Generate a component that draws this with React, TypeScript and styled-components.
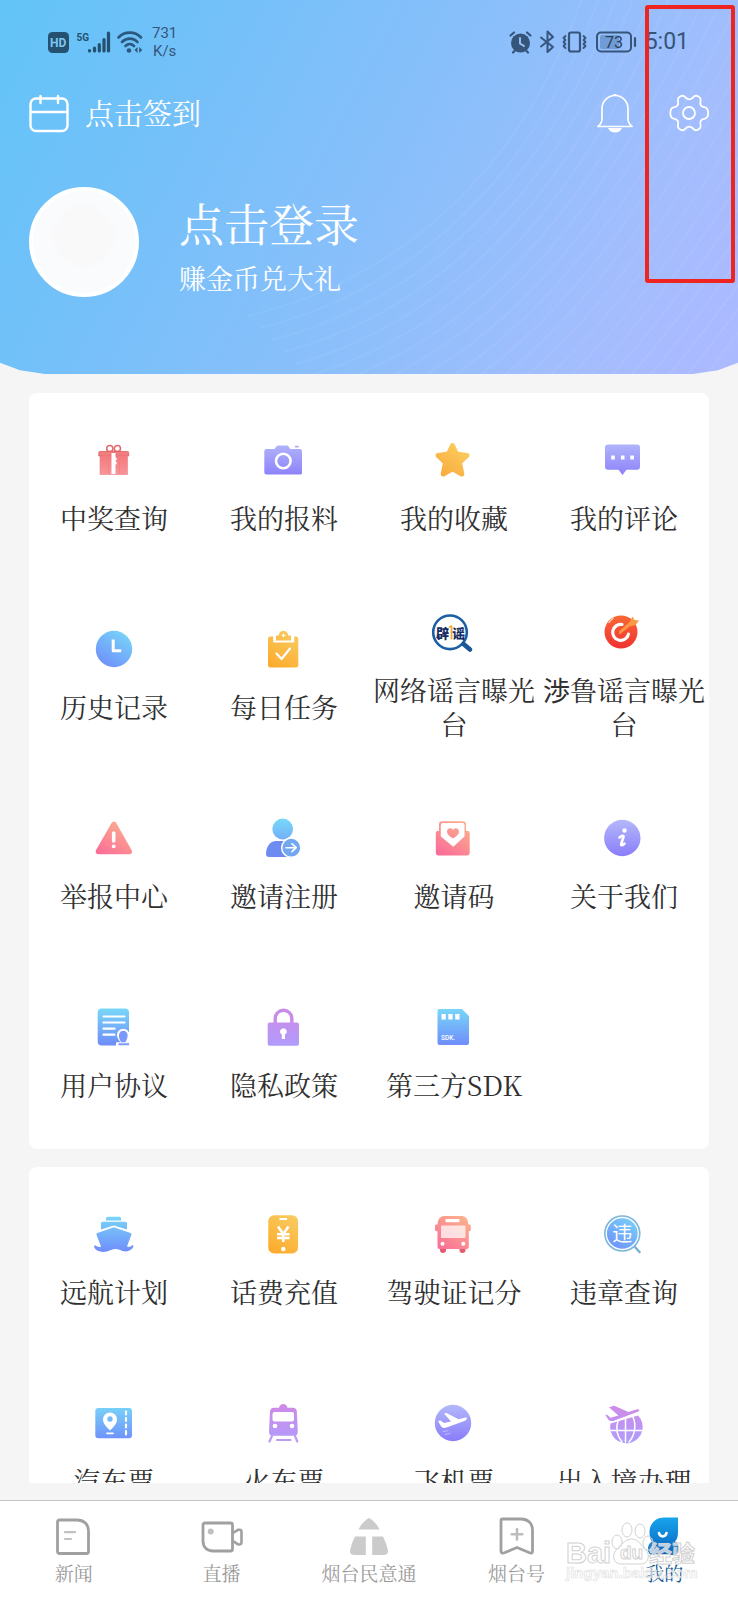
import React from "react";
import styled, { createGlobalStyle } from "styled-components";

const serif = `"Noto Serif CJK SC", "Liberation Serif", "Noto Sans CJK SC", serif`;

const GlobalStyle = createGlobalStyle`
  * { box-sizing: border-box; }
  body { margin: 0; background: #f5f5f5; font-family: ${serif}; font-weight: 400; }
  button { border: 0; padding: 0; background: none; font: inherit; color: inherit; cursor: pointer; }
  a { color: inherit; text-decoration: none; }
  svg { display: block; overflow: visible; flex: none; }
`;

const Screen = styled.div`
  position: relative;
  display: flex;
  flex-direction: column;
  height: 100vh;
  background: #f5f5f5;
`;

const Scroller = styled.div`
  flex: 1;
  min-height: 0;
  margin-bottom: 17px;
  overflow-y: auto;
  scrollbar-width: none;
`;

const Header = styled.header`
  position: relative;
  padding-bottom: 77px;
  color: #fff;
  background: linear-gradient(118deg, #62c4f8 0%, #76c0f9 28%, #8dbffb 58%, #a3bdfd 82%, #adb9ff 100%);
  clip-path: polygon(0 0, 100% 0, 100% 97%, calc(100% - 20px) 99%, calc(100% - 45px) 100%, 45px 100%, 20px 99%, 0 97%);
`;

const Waves = styled.svg`
  position: absolute;
  right: 0;
  bottom: 0;
  width: 500px;
  height: 374px;
`;

const StatusBar = styled.div`
  position: relative;
  display: flex;
  align-items: center;
  justify-content: space-between;
  height: 84px;
  padding: 0 49px 0 48px;
  color: #35557a;
  font-family: Roboto, sans-serif;
  font-weight: 400;
`;

const StatusGroup = styled.div<{ $gap: number }>`
  display: flex;
  align-items: center;
  gap: ${(p) => p.$gap}px;
`;

const Speed = styled.div`
  font-size: 15px;
  line-height: 18px;
  text-align: center;
`;

const Clock = styled.time`
  font-size: 23px;
  line-height: 26px;
`;

const ActionRow = styled.div`
  position: relative;
  display: flex;
  align-items: center;
  justify-content: space-between;
  height: 58px;
  padding: 0 29px;
`;

const SignIn = styled.button`
  display: flex;
  align-items: center;
  gap: 16px;
  font-size: 29px;
  line-height: 40px;
`;

const Tools = styled.div`
  display: flex;
  gap: 34px;
`;

const Profile = styled.button`
  position: relative;
  display: flex;
  align-items: flex-end;
  gap: 40px;
  margin: 45px 29px 0;
  text-align: left;
`;

const Avatar = styled.span`
  width: 110px;
  height: 110px;
  border: 4px solid #fff;
  border-radius: 50%;
  background: radial-gradient(circle at 50% 44%, #f9f9fa 0 28px, #fafbfd 34px);
`;

const ProfileText = styled.span`
  display: flex;
  flex-direction: column;
  gap: 10px;
`;

const Name = styled.span`
  font-size: 45px;
  line-height: 52px;
`;

const Hint = styled.span`
  font-size: 27px;
  line-height: 38px;
`;

const Cards = styled.main`
  display: flex;
  flex-direction: column;
  gap: 18px;
  padding: 19px 29px 0;
`;

const Card = styled.section`
  display: grid;
  grid-template-columns: repeat(4, 1fr);
  grid-auto-rows: 189px;
  border-radius: 8px;
  background: #fff;
`;

const Entry = styled.a`
  display: flex;
  flex-direction: column;
  align-items: center;
  justify-content: center;
  gap: 21px;
  color: #303030;
  font-size: 27px;
  line-height: 34px;
  text-align: center;
`;

const SansGlyph = styled.span`
  font-family: "Noto Sans CJK SC", sans-serif;
  line-height: 1;
`;

const TabBar = styled.nav`
  position: relative;
  display: grid;
  grid-template-columns: repeat(5, 1fr);
  height: 100px;
  border-top: 1px solid #c4c4c4;
  background: #fff;
`;

const Tab = styled.a<{ $active?: boolean }>`
  display: flex;
  flex-direction: column;
  align-items: center;
  gap: 2px;
  padding-top: 16px;
  color: ${(p) => (p.$active ? "#0f5590" : "#999")};
  font-size: 19px;
  line-height: 28px;
`;

const Highlight = styled.div`
  position: absolute;
  top: 5px;
  right: 3px;
  width: 90px;
  height: 278px;
  border: 4px solid #ee2420;
  border-radius: 3px;
  pointer-events: none;
`;

const Watermark = styled.svg`
  position: absolute;
  right: 36px;
  bottom: 12px;
  pointer-events: none;
`;

/* ---------- entry icons, all on a 40 x 40 grid ---------- */

type Stops = [string, string];
const blue: Stops = ["#78d6f8", "#6f8dfb"];
const violet: Stops = ["#b3b8fb", "#8a7dfa"];
const gold: Stops = ["#f8cc62", "#fcab2c"];
const coral: Stops = ["#fbb48c", "#fb6c98"];
const orchid: Stops = ["#d08ae6", "#b09cfc"];

function Icon({ id, stops, diagonal, children }: { id: string; stops: Stops; diagonal?: boolean; children: React.ReactNode }) {
  return (
    <svg width="40" height="40" viewBox="0 0 40 40" fill={`url(#${id})`} aria-hidden="true">
      <defs>
        <linearGradient id={id} gradientUnits="userSpaceOnUse" x1={diagonal ? 32 : 20} y1="2" x2={diagonal ? 8 : 20} y2="38">
          <stop offset="0" stopColor={stops[0]} />
          <stop offset="1" stopColor={stops[1]} />
        </linearGradient>
      </defs>
      {children}
    </svg>
  );
}

const line = (w: number, stroke = "#fff") =>
  ({ fill: "none", stroke, strokeWidth: w, strokeLinecap: "round", strokeLinejoin: "round" }) as const;

const Gift = () => (
  <Icon id="gift" stops={["#ee6668", "#f99a9f"]}>
    <circle cx="15.800" cy="8.500" r="3.100" {...line(1.500, "#e4686b")} />
    <circle cx="23.400" cy="8.500" r="3.100" {...line(1.500, "#e4686b")} />
    <path d="M6 11.500h27.500a1.200 1.200 0 0 1 1.200 1.200v3.300H4.800v-3.300A1.200 1.200 0 0 1 6 11.500z" fill="#f07e7e" stroke="#dd6064" strokeWidth=".8" />
    <path d="M6 16h27.500v18.500H6z" stroke="#ee7f86" strokeWidth=".6" />
    <path d="M17.500 13h4v4l1.500 2-1.500 2 1.500 2-1.500 2v9h-4z" fill="#fff" />
    <path d="M14.500 17v17M25.500 18v16" stroke="#f07d80" strokeWidth=".7" />
  </Icon>
);
const Camera = () => (
  <Icon id="camera" stops={violet}>
    <path d="M2.500 9H10c1.500 0 2-3.600 4-3.600h9c2 0 2.500 3.600 4 3.600h8.800A2.200 2.200 0 0 1 38 11.200v21A2.200 2.200 0 0 1 35.800 34.600H2.500A2.200 2.200 0 0 1 .3 32.300V11.200A2.200 2.200 0 0 1 2.500 9z" />
    <circle cx="19.300" cy="21" r="7.300" {...line(2.6)} />
    <path d="M31.500 6.600h2.500" {...line(1.600, "#aaa9f0")} />
  </Icon>
);
const Star = () => (
  <Icon id="star" stops={["#fbd262", "#f9a93c"]} diagonal>
    <path d="M18.500 5.500l4 8.500 10.500 1.500-7.500 7 2.300 11.500-9.300-5.200-9.300 5.200 2.300-11.500-7.500-7 10.500-1.500z" stroke="url(#star)" strokeWidth="5" strokeLinejoin="round" />
  </Icon>
);
const Comment = () => (
  <Icon id="comment" stops={violet}>
    <path d="M4 4.400h29a3 3 0 0 1 3 3v19.300a3 3 0 0 1-3 3H22.500L18.500 35l-4-5.300H4a3 3 0 0 1-3-3V7.400a3 3 0 0 1 3-3z" />
    <path d="M7.200 15.500h3.600v4H7.200zM16.900 15.500h3.600v4h-3.600zM26.300 15.500h3.600v4h-3.600z" fill="#fff" />
  </Icon>
);
const History = () => (
  <Icon id="history" stops={blue} diagonal>
    <circle cx="20" cy="20" r="18.200" />
    <path d="M19.200 12v9.700h6.500" {...line(3)} strokeLinecap="square" />
  </Icon>
);
const Task = () => (
  <Icon id="task" stops={gold} diagonal>
    <rect x="4" y="7.500" width="30.300" height="31" rx="2.500" />
    <path d="M9.200 4h21v9.500h-21z" fill="#fff" />
    <path d="M12 11.500V6.600h2.600a4.800 4.800 0 0 1 9.600 0H27v4.900z" />
    <path d="M19.500 5.200v2.400M18.300 6.400h2.400" {...line(1.300)} />
    <path d="M12.500 24.500l5 5.500 8.500-10.500" {...line(2.200)} />
  </Icon>
);
const Rumor = () => (
  <Icon id="rumor" stops={blue}>
    <circle cx="16" cy="20.300" r="16.800" {...line(2.600, "#1c5fa5")} />
    <path d="M29.500 32l6.500 5.600" {...line(4.600, "#1a5799")} />
    <text x="2" y="25.500" fontSize="13" fontWeight="900" fill="#162c62" fontFamily="Noto Sans CJK SC, sans-serif">辟</text>
    <text x="18" y="25.500" fontSize="13" fontWeight="900" fill="#162c62" fontFamily="Noto Sans CJK SC, sans-serif">谣</text>
    <path d="M15.500 15l2-.800V26.500" {...line(1.800, "#f0ab3a")} />
  </Icon>
);
const Target = () => (
  <Icon id="target" stops={["#fa6a35", "#f02f31"]}>
    <circle cx="17" cy="20" r="16.500" />
    <path d="M5 10.500a16 16 0 0 1 4-4" {...line(1.400, "#ffc9b0")} />
    <path d="M18 12.500a8 8 0 1 0 6.500 9.500" {...line(3.200)} />
    <path d="M15 19.500l11-10 2.500-5 2 3.500 4.500.500-3.500 4.500-6 1.500-10 8z" fill="#fb9a44" />
  </Icon>
);
const Warning = () => (
  <Icon id="warning" stops={coral} diagonal>
    <path d="M20 6.500L35.200 33.500H4.500z" stroke="url(#warning)" strokeWidth="5.600" strokeLinejoin="round" />
    <path d="M19.700 15v8" {...line(3.600)} />
    <circle cx="19.700" cy="28.300" r="1.900" fill="#fff" />
  </Icon>
);
const Invite = () => (
  <Icon id="invite" stops={blue}>
    <circle cx="18.700" cy="11" r="10.400" />
    <path d="M12 23h16v16H5c-2 0-3-1-3-3 0-7 4-13 10-13z" fill="#6d8cf2" />
    <circle cx="27.300" cy="29.700" r="9.600" fill="#72a8f2" stroke="#fff" strokeWidth="1.500" />
    <path d="M22 29.700h10M28 25.800l4.200 3.900-4.200 3.900" {...line(1.600)} />
  </Icon>
);
const Envelope = () => (
  <Icon id="envelope" stops={coral} diagonal>
    <path d="M8 3.200h21a3 3 0 0 1 3 3V13h1.700a2 2 0 0 1 2 2v20a2.400 2.400 0 0 1-2.400 2.400H4.200A2.400 2.400 0 0 1 1.800 35V15a2 2 0 0 1 2-2H5V6.200a3 3 0 0 1 3-3z" />
    <path d="M8.500 5h20a2 2 0 0 1 2 2v11.500L19.300 28.800 6.800 18.500V7a2 2 0 0 1 1.700-2z" fill="#fff" />
    <path d="M19 20.500c-4-2.500-6-4.200-6-7 0-3.600 4.500-4.500 6-1.500 1.500-3 6-2.100 6 1.500 0 2.800-2 4.500-6 7z" />
  </Icon>
);
const Info = () => (
  <Icon id="info" stops={violet}>
    <circle cx="18.300" cy="20" r="18.200" />
    <circle cx="20.500" cy="12.500" r="2.200" fill="#fff" />
    <path d="M15.500 19.500c2-2 4.500-2.500 4-.500l-2.200 6.500c-.800 2.500 1.500 2 3.200.200" {...line(2.600)} />
  </Icon>
);
const Agreement = () => (
  <Icon id="agreement" stops={blue}>
    <rect x="3.700" y="1.500" width="31.300" height="37" rx="4" />
    <path d="M9.500 9.500h21M9.500 15.500h21M9.500 21.700h11M9.500 27.700h11" {...line(2.200)} />
    <path d="M22 39v-3.500h5c-3-3-4-5-4-7.500a6 6 0 0 1 12.500 0V39z" fill="#fff" />
    <path d="M24.500 35.500h3c-2-3-2.800-5-2.500-7.500a4.300 4.300 0 0 1 8.600 0c0 2.500-.500 4.500-2.500 7.500h4v2.800H24.500z" fill="#7b99f8" />
    <path d="M23.500 35.800h12" {...line(1)} />
  </Icon>
);
const Lock = () => (
  <Icon id="lock" stops={orchid}>
    <path d="M11.200 18V11.500a8.300 8.300 0 0 1 16.600 0V18" {...line(3.400, "#c78de8")} />
    <rect x="3.700" y="15.500" width="31.300" height="23.200" rx="2" />
    <path d="M19.400 21.200a3.400 3.400 0 0 1 1.600 6.400V32h-3.200v-4.400a3.400 3.400 0 0 1 1.600-6.400z" fill="#fff" />
  </Icon>
);
const Sdk = () => (
  <Icon id="sdk" stops={blue}>
    <path d="M5.500 2H28l7 7v27a2 2 0 0 1-2 2H5.500a2 2 0 0 1-2-2V4a2 2 0 0 1 2-2z" />
    <path d="M7.500 7h4.300v5.500H7.500zM14.300 7h4.300v5.500h-4.300zM21.200 7h4.300v5.500h-4.300z" fill="#fff" />
    <text x="7" y="33" fontSize="6.500" fontWeight="500" fill="#fff" fontFamily="Roboto, sans-serif">SDK.</text>
  </Icon>
);
const Ship = () => (
  <Icon id="ship" stops={blue}>
    <path d="M13.500 2.800h12a1.500 1.500 0 0 1 1.500 1.500V6.500H12V4.300a1.500 1.500 0 0 1 1.500-1.500z" />
    <path d="M8.500 7.800H31.500a1.500 1.500 0 0 1 1.500 1.500V15.500L19.800 11.500 7 15.500V9.300a1.500 1.500 0 0 1 1.500-1.500z" />
    <path d="M19.800 13.200L36.500 19c1 .400 1.200 1 .800 2L33 32.500c1.500.800 3.500.500 5.500-1.500 1.200.300 1.200 1.500.300 2.800-3.500 4.600-9 4.300-12.800 2.200-3-1.300-6-1.300-9 0C10 39.500 2.500 38 .400 33.800c-.700-1.300 0-2.500 1-2.500C3.500 33 5.500 33.500 7 32.500L2.600 21c-.400-1-.200-1.600.800-2z" />
  </Icon>
);
const Recharge = () => (
  <Icon id="recharge" stops={gold} diagonal>
    <rect x="4.300" y="1.200" width="29.800" height="38.400" rx="6" />
    <path d="M16.500 5h5.500" {...line(2)} strokeLinecap="square" />
    <path d="M14 12.500l5.300 7.500 5.300-7.500M13 20.200h12.600M13 24h12.600M19.300 20v8" {...line(2.600)} strokeLinecap="butt" />
    <circle cx="19.300" cy="35" r="2.200" fill="#fff" />
  </Icon>
);
const Bus = () => (
  <Icon id="bus" stops={coral} diagonal>
    <path d="M6 33h6v3a3 3 0 0 1-6 0zM25.500 33h6v3a3 3 0 0 1-6 0z" fill="#e45a70" />
    <path d="M10 2h18c4 .400 6 3 6.300 8.500h1.200q1.300 0 1.300 1.300v4q0 1.500-2 1.500V33q0 2-2 2H5.500q-2 0-2-2V17.300Q1 17.300 1 15.800v-4q0-1.300 1.300-1.300h1.200C4 5 6 2.400 10 2z" />
    <rect x="11.500" y="5" width="14" height="3.200" rx="1" fill="#fff" />
    <rect x="7" y="11.500" width="24.500" height="12.500" rx="1" fill="#fff" opacity=".72" />
    <circle cx="8.500" cy="29.700" r="2" fill="#fff" />
    <circle cx="29.300" cy="29.700" r="2" fill="#fff" />
  </Icon>
);
const Violation = () => (
  <Icon id="violation" stops={blue} diagonal>
    <path d="M30.500 32.500l5 5.500" {...line(2.600, "#7fb3d2")} />
    <circle cx="18.300" cy="19.500" r="18.300" fill="#7cb6dc" />
    <circle cx="18.300" cy="19.500" r="16" stroke="#fff" strokeWidth="1.300" />
    <text x="8.300" y="27" fontSize="20" fontWeight="400" fill="#fff" fontFamily="Noto Sans CJK SC, sans-serif">违</text>
  </Icon>
);
const Ticket = () => (
  <Icon id="ticket" stops={blue}>
    <rect x="1.300" y="5" width="36.700" height="30.200" rx="3" />
    <path d="M16 27.500c-4-4-7-7-7-11a7 7 0 0 1 14 0c0 4-3 7-7 11z" fill="#fff" />
    <circle cx="16" cy="16" r="2.700" />
    <path d="M13 30.300h6" {...line(1.800)} />
    <path d="M32 8.500v3M32 15v3M32 21.500v3M32 28v3.500" {...line(2.200)} />
  </Icon>
);
const Train = () => (
  <Icon id="train" stops={orchid}>
    <path d="M15 5.500c0-6 8.500-6 8.500 0z" />
    <path d="M10 4.800h19q3.500 0 3.800 3.500l1 20.200q.200 4.200-4 4.200H9q-4.200 0-4-4.200l1-20.200q.300-3.500 4-3.500z" />
    <rect x="8.500" y="9" width="21.500" height="9.500" rx="2" fill="#fff" />
    <circle cx="11" cy="23" r="2.300" fill="#fff" />
    <circle cx="28" cy="23" r="2.300" fill="#fff" />
    <path d="M8 33l-2.500 5.500M31 33l2.300 5.500M13 37h13.500" {...line(2.200, "#bd9bf5")} />
  </Icon>
);
const Flight = () => (
  <Icon id="flight" stops={violet}>
    <circle cx="19" cy="20" r="18.200" />
    <path d="M4 18l2.500-.500 3.500 2.500 7-1.500-7-8 2.500-.600 12 6.300 6-1.500c3-.600 3 2 .500 3L12.500 24.500c-2.500.800-4.500.300-5.500-1.200z" fill="#fff" />
    <path d="M9 28.500l5-.800M11 31.500l5-1" {...line(.8, "#c8c6fd")} />
  </Icon>
);
const Border = () => (
  <Icon id="border" stops={orchid}>
    <path d="M6.500 20.500L34 12.500a16.300 16.300 0 1 1-27.500 8z" />
    <path d="M5 27.500h33M21.500 15v24M14 18c-2.500 7-1.500 14 4 21M29 14c3.500 8 2 18-4 25" {...line(1.500)} />
    <path d="M.500 11.500l2.700-.500 3.500 3 6.500-1.800L4 4.200 10 2l14.500 6.300L32 6c4.500-1 5.500 2 1.500 3.500L10 18.200c-3 1-5 .300-6.500-1.700z" stroke="#fff" strokeWidth="1.200" />
  </Icon>
);

const services = [
  ["中奖查询", Gift], ["我的报料", Camera], ["我的收藏", Star], ["我的评论", Comment],
  ["历史记录", History], ["每日任务", Task], ["网络谣言曝光台", Rumor], ["渉鲁谣言曝光台", Target],
  ["举报中心", Warning], ["邀请注册", Invite], ["邀请码", Envelope], ["关于我们", Info],
  ["用户协议", Agreement], ["隐私政策", Lock], ["第三方SDK", Sdk],
] as const;

const life = [
  ["远航计划", Ship], ["话费充值", Recharge], ["驾驶证记分", Bus], ["违章查询", Violation],
  ["汽车票", Ticket], ["火车票", Train], ["飞机票", Flight], ["出入境办理", Border],
] as const;

/* ---------- tab icons ---------- */

const NewsIcon = () => (
  <svg width="40" height="40" viewBox="0 0 40 40" aria-hidden="true">
    <path d="M5.500 3H23c7 0 11.500 4.500 11.500 11v20.500a2 2 0 0 1-2 2h-27a2 2 0 0 1-2-2V5a2 2 0 0 1 2-2z" {...line(2.800, "#a0a0a0")} />
    <path d="M11 15.200h10M11 22h6" {...line(2.200, "#c2c2c2")} />
  </svg>
);
const LiveIcon = () => (
  <svg width="40" height="40" viewBox="0 0 40 40" aria-hidden="true">
    <path d="M4 6h25.500a2 2 0 0 1 2 2v24a2 2 0 0 1-2 2H12C6 34 2 30 2 24V8a2 2 0 0 1 2-2z" {...line(2.800, "#a0a0a0")} />
    <path d="M32 16l5-3.200q3.500-.600 3.500 2V25.500q0 2.500-3.500 1.800L32 24" {...line(2.600, "#a0a0a0")} />
    <circle cx="9.700" cy="14.500" r="3" fill="#c0c0c0" />
  </svg>
);
const PublicIcon = () => (
  <svg width="40" height="40" viewBox="0 0 40 40" fill="#cbcbcb" aria-hidden="true">
    <path d="M20 1c4.500 2.500 8 6.500 10.500 11.500h-21C12 7.500 15.500 3.500 20 1z" />
    <path d="M6 19.500h10.800V38H5q-4.500-.500-4-4.500Q2.500 26 6 19.500zM23.200 19.500H34q3.500 6.500 5 14 .500 4-4 4.500H23.200z" />
  </svg>
);
const ChannelIcon = () => (
  <svg width="40" height="40" viewBox="0 0 40 40" aria-hidden="true">
    <path d="M5.500 2H24c7 0 11.500 4.500 11.500 11v21q0 3-3 1.800L20 30.500 7.500 35.800Q4 37 4 34V3.500Q4 2 5.500 2z" {...line(2.800, "#a0a0a0")} />
    <path d="M20 12v10.500M14.700 17.200h10.600" {...line(2.600, "#bdbdbd")} />
  </svg>
);
const MineIcon = () => (
  <svg width="40" height="40" viewBox="0 0 40 40" aria-hidden="true">
    <defs>
      <linearGradient id="mine" x1="0" y1="0" x2="0" y2="1">
        <stop offset="0" stopColor="#18a4ec" />
        <stop offset="1" stopColor="#0a63bd" />
      </linearGradient>
    </defs>
    <path d="M20 .500h14v14c0 5-1 8-3 10 3 1.500 4.500 4 4 8.500q-.500 5-5 5H9q-4.500 0-5-5c-.500-4 1.500-7 4-8.500-2-2.500-2.500-5-2.500-9.500C5.500 6.500 12 .500 20 .500z" fill="url(#mine)" />
    <path d="M15 16c1 4.500 6.500 4.500 7.500 0" {...line(2.600)} />
  </svg>
);

const tabs = [
  ["新闻", NewsIcon], ["直播", LiveIcon], ["烟台民意通", PublicIcon], ["烟台号", ChannelIcon], ["我的", MineIcon],
] as const;

const labelText = (label: string) =>
  label.startsWith("渉") ? (
    <>
      <SansGlyph>渉</SansGlyph>
      {label.slice(1)}
    </>
  ) : (
    label
  );

function EntryGrid({ items }: { items: readonly (readonly [string, React.ComponentType])[] }) {
  return (
    <Card>
      {items.map(([label, Glyph]) => (
        <Entry href="#" key={label}>
          <Glyph />
          <span>{labelText(label)}</span>
        </Entry>
      ))}
    </Card>
  );
}

const ink = "#35557a";

export default function App() {
  return (
    <Screen>
      <GlobalStyle />
      <Scroller>
        <Header>
          <Waves viewBox="0 0 500 374" aria-hidden="true">
            {Array.from({ length: 22 }, (_, i) => (
              <path
                key={i}
                d={`M${10 + i * 12} ${316 + i * 12} C ${160 + i * 10} ${280 + i * 11}, ${290 + i * 9} ${170 + i * 10}, ${350 + i * 16} ${-20 + i * 4}`}
                fill="none"
                stroke="#fff"
                strokeOpacity=".06"
                strokeWidth="2"
              />
            ))}
          </Waves>
          <StatusBar>
            <StatusGroup $gap={10}>
              <svg width="94" height="24" viewBox="0 0 94 24" aria-hidden="true">
                <rect x="0" y="2" width="21" height="21" rx="4.500" fill="#23516f" />
                <text x="2" y="17" fontSize="12" fontWeight="700" fill="#7fc6f0">HD</text>
                <text x="28.500" y="10.500" fontSize="10" fontWeight="700" fill="#23516f">5G</text>
                <path d="M41.500 20.500v.500M46.500 18v3M51.300 14.500v6.500M56 9.500v11.500M60.500 3v18" {...line(3.200, "#23516f")} />
                <path d="M70.500 7.500c6-6.500 16.500-6.500 22.500 0M74 12c4.500-4.500 11.500-4.500 15.500 0M77.500 16c2.500-2.500 6-2.500 8.500 0" {...line(2.600, "#2c587e")} />
                <circle cx="81" cy="20.500" r="2.300" fill="#2c587e" />
                <path d="M89.500 17v6l-3-3zM91.200 17v6l3-3z" fill="#2c587e" />
              </svg>
              <Speed>731<br />K/s</Speed>
            </StatusGroup>
            <StatusGroup $gap={9}>
              <svg width="128" height="24" viewBox="0 0 128 24" aria-hidden="true">
                <circle cx="12.500" cy="13" r="9.500" fill={ink} />
                <path d="M2.500 5.500l3.500-3M22.500 5.500l-3.500-3M5 22.500l3-3M20 22.500l-3-3" {...line(2.200, ink)} />
                <path d="M12 8v5.500l4 2.500" {...line(1.900, "#9cc4f5")} />
                <path d="M33 7.500l12 9.500-5.500 5V1.500L45 7 33 16.500" {...line(2, ink)} />
                <rect x="61" y="2.500" width="11" height="19" rx="2" {...line(2.200, ink)} />
                <path d="M57.500 6l-2 2 2 2-2 2 2 2-2 2 2 2M75.500 6l2 2-2 2 2 2-2 2 2 2-2 2" {...line(1.800, ink)} />
                <rect x="89" y="2.500" width="34" height="19" rx="4" {...line(2, ink)} />
                <path d="M94 5h17v14H94q-2 0-2-2V7q0-2 2-2z" fill="#719bd4" />
                <text x="97" y="18" fontSize="16" fill="#27425f">73</text>
                <path d="M127 8v8" {...line(2.200, ink)} />
              </svg>
              <Clock>5:01</Clock>
            </StatusGroup>
          </StatusBar>
          <ActionRow>
            <SignIn type="button">
              <svg width="40" height="40" viewBox="0 0 40 40" aria-hidden="true">
                <path d="M7 5.500h26a5.500 5.500 0 0 1 5.500 5.500v21.500a5.500 5.500 0 0 1-5.500 5.500H7a5.500 5.500 0 0 1-5.500-5.500V11A5.500 5.500 0 0 1 7 5.500zM1.500 19h37M11.500 3v7M29 3v7" {...line(2.400)} />
              </svg>
              <span>点击签到</span>
            </SignIn>
            <Tools>
              <button type="button" aria-label="消息">
                <svg width="40" height="40" viewBox="0 0 40 40" aria-hidden="true">
                  <path d="M3 33.500h34q-4-3-4-8V15.500a13 13 0 0 0-26 0v10q0 5-4 8z" {...line(1.700)} />
                  <path d="M17.500 2q2.500-2 5 0M13 35h14q-2 4.500-7 4.500T13 35z" fill="#fff" />
                </svg>
              </button>
              <button type="button" aria-label="设置">
                <svg width="40" height="40" viewBox="0 0 40 40" aria-hidden="true">
                  <path d="M16.500 4.500C19 7 21.500 7 24 4.500c1.500-2 3-2.300 5-1.200 2.500 1.400 3.200 2.700 2.500 5-.800 3.200.500 5.200 3.700 5.800 2.800.500 4 2 4 5.900s-1.200 5.400-4 5.900c-3.200.600-4.500 2.600-3.700 5.800.700 2.300 0 3.600-2.500 5-2 1.100-3.500.800-5-1.200-2.500-2.500-5-2.500-7.500 0-1.500 2-3 2.300-5 1.200-2.500-1.400-3.200-2.700-2.500-5 .800-3.200-.500-5.200-3.700-5.800-2.800-.500-4-2-4-5.900s1.200-5.400 4-5.900c3.200-.600 4.500-2.600 3.700-5.800-.700-2.300 0-3.600 2.500-5 2-1.100 3.500-.800 5 1.200z" {...line(1.800)} />
                  <circle cx="20" cy="20" r="6" {...line(1.800)} />
                </svg>
              </button>
            </Tools>
          </ActionRow>
          <Profile type="button">
            <Avatar />
            <ProfileText>
              <Name>点击登录</Name>
              <Hint>赚金币兑大礼</Hint>
            </ProfileText>
          </Profile>
        </Header>
        <Cards>
          <EntryGrid items={services} />
          <EntryGrid items={life} />
        </Cards>
      </Scroller>
      <TabBar>
        {tabs.map(([label, Glyph]) => (
          <Tab href="#" key={label} $active={label === "我的"}>
            <Glyph />
            <span>{label}</span>
          </Tab>
        ))}
        <Watermark width="136" height="68" viewBox="0 0 136 68" fontFamily="Liberation Sans, Noto Sans CJK SC, sans-serif" aria-hidden="true">
          <g fill="#fff" fillOpacity=".7" stroke="#d2d2d2" strokeWidth="1">
            <text x="0" y="43" fontSize="29" fontWeight="700">Bai</text>
            <ellipse cx="51" cy="22" rx="5" ry="7" fillOpacity=".1" />
            <ellipse cx="61" cy="10" rx="5" ry="7" fillOpacity=".1" />
            <ellipse cx="74" cy="11" rx="5" ry="7" fillOpacity=".1" />
            <ellipse cx="82" cy="23" rx="5" ry="7" fillOpacity=".1" />
            <path d="M66 19c7 0 9 7 14 11 4 4 3 13-4 14H54c-7-1-8-9-4-14 5-4 8-11 16-11z" fillOpacity=".2" />
            <text x="54" y="39" fontSize="19" fontWeight="700">du</text>
            <text x="83" y="42" fontSize="23" fontWeight="700" fontFamily="Noto Sans CJK SC, sans-serif">经验</text>
          </g>
          <text x="0" y="58" fontSize="15" fontWeight="700" fill="#fff" fillOpacity=".6" stroke="#dedede" strokeWidth=".6">jingyan.baidu.com</text>
        </Watermark>
      </TabBar>
      <Highlight />
    </Screen>
  );
}
